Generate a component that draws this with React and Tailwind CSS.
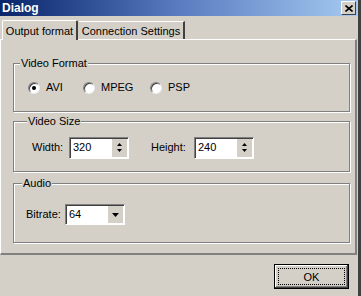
import React from "react";

function Radio({ checked, label }) {
  return (
    <div className="flex items-center gap-[6px]">
      <span className="relative w-[12px] h-[12px] rounded-full bg-white border border-t-[#808080] border-l-[#808080] border-b-[#eeeeee] border-r-[#eeeeee] shadow-[inset_1px_1px_0_#404040] flex items-center justify-center">
        {checked && <span className="w-[4px] h-[4px] rounded-full bg-black" />}
      </span>
      <span>{label}</span>
    </div>
  );
}

function Group({ title, titleX, className, children }) {
  return (
    <div className={"relative border border-[#808080] shadow-[inset_1px_1px_0_#ffffff,1px_1px_0_#ffffff] " + className}>
      <span className={"absolute top-[-8px] bg-[#d4d0c8] px-[1px] leading-[14px] " + titleX}>{title}</span>
      {children}
    </div>
  );
}

function SpinBox({ value }) {
  return (
    <div className="w-[60px] h-[22px] bg-white border border-t-[#808080] border-l-[#808080] border-b-white border-r-white shadow-[inset_1px_1px_0_#404040] flex items-center pl-[3px]">
      <span className="flex-1">{value}</span>
      <div className="w-[15px] h-[18px] mr-[1px] bg-[#d4d0c8] flex flex-col items-center justify-center gap-[3px]">
        <svg width="5" height="3" viewBox="0 0 5 3"><path d="M2.5 0 L5 3 L0 3 Z" fill="#000" /></svg>
        <svg width="5" height="3" viewBox="0 0 5 3"><path d="M0 0 L5 0 L2.5 3 Z" fill="#000" /></svg>
      </div>
    </div>
  );
}

export default function App() {
  return (
    <div
      className="w-[361px] h-[296px] bg-[#d4d0c8] text-[11px] text-black overflow-hidden flex flex-col border-r-[3px] border-r-[#404040]"
      style={{ fontFamily: '"Liberation Sans", Arial, sans-serif' }}
    >
      {/* Title bar */}
      <div className="h-[16px] bg-gradient-to-r from-[#0a246a] via-[#5a7cc0] to-[#a6caf0] flex items-center justify-between pl-[2px] pr-[2px]">
        <span className="text-white font-bold text-[12px] leading-[16px]">Dialog</span>
        <div className="w-[15px] h-[14px] bg-[#d4d0c8] border border-t-white border-l-white border-b-[#404040] border-r-[#404040] flex items-center justify-center">
          <svg width="8" height="7" viewBox="0 0 8 7">
            <path d="M0.5 0.5 L7.5 6.5 M7.5 0.5 L0.5 6.5" stroke="#000" strokeWidth="1.6" />
          </svg>
        </div>
      </div>

      {/* Tabs */}
      <div className="flex items-end pl-[2px] mt-[3px] h-[20px]">
        <div className="relative z-10 w-[76px] h-[20px] mb-[-1px] bg-[#d4d0c8] border-l border-t border-white border-r-2 border-r-[#404040] rounded-t-[2px] flex items-center justify-center leading-[14px]">
          Output format
        </div>
        <div className="w-[106px] h-[18px] ml-[1px] border-t border-white border-r-2 border-r-[#404040] flex items-center justify-center leading-[14px]">
          Connection Settings
        </div>
      </div>

      {/* Panel */}
      <div className="w-[357px] h-[216px] border-t border-l border-white border-r-2 border-b-2 border-r-[#808080] border-b-[#808080] pt-[23px] pl-[12px] flex flex-col">
        <Group title="Video Format" titleX="left-[6px]" className="w-[337px] h-[49px] mb-[9px]">
          <div className="flex items-center h-full pl-[14px]">
            <div className="w-[55px]"><Radio checked label="AVI" /></div>
            <div className="w-[67px]"><Radio label="MPEG" /></div>
            <Radio label="PSP" />
          </div>
        </Group>
        <Group title="Video Size" titleX="left-[13px]" className="w-[337px] h-[51px] mb-[11px]">
          <div className="flex items-center h-full pt-[2px] pl-[18px]">
            <span className="w-[37px]">Width:</span>
            <SpinBox value="320" />
            <span className="ml-[22px] w-[43px]">Height:</span>
            <SpinBox value="240" />
          </div>
        </Group>
        <Group title="Audio" titleX="left-[8px]" className="w-[337px] h-[60px]">
          <div className="flex items-center pt-[20px] pl-[12px]">
            <span className="w-[39px]">Bitrate:</span>
            <div className="w-[60px] h-[21px] bg-white border border-t-[#808080] border-l-[#808080] border-b-white border-r-white shadow-[inset_1px_1px_0_#404040] flex items-center pl-[3px]">
              <span className="flex-1">64</span>
              <div className="w-[15px] h-[17px] mr-[1px] bg-[#d4d0c8] flex items-center justify-center">
                <svg width="7" height="4" viewBox="0 0 7 4"><path d="M0 0 L7 0 L3.5 4 Z" fill="#000" /></svg>
              </div>
            </div>
          </div>
        </Group>
      </div>

      {/* Footer */}
      <div className="flex justify-end pr-[9px] pt-[9px]">
        <div className="w-[75px] h-[25px] border border-black bg-[#d4d0c8] shadow-[inset_-1px_-1px_0_#404040,inset_1px_1px_0_#ffffff,inset_-2px_-2px_0_#808080] p-[3px]">
          <div className="w-full h-full border border-dotted border-black flex items-center justify-center leading-[14px]">
            OK
          </div>
        </div>
      </div>
    </div>
  );
}
